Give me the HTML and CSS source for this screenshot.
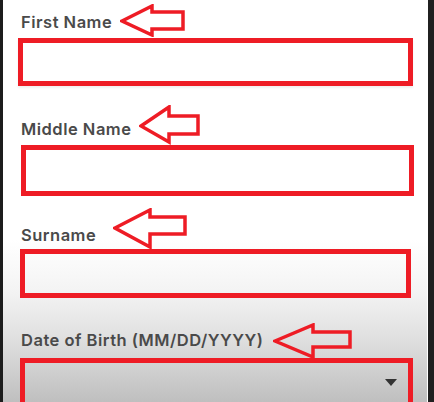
FILE: index.html
```html
<!DOCTYPE html>
<html lang="en">
<head>
<meta charset="utf-8">
<title>Form</title>
<link rel="stylesheet" href="styles.css">
</head>
<body>
<div class="screen">
  <div class="edge edge-left"></div>
  <main class="form">
    <section class="field g1">
      <div class="label-row">
        <label class="label">First Name</label>
        <svg class="arrow" width="66" height="33" viewBox="0 0 66 33"><polygon points="2,17 32,2 32,8 63,8 63,25 32,25 32,31"/></svg>
      </div>
      <div class="box"></div>
    </section>
    <section class="field g2">
      <div class="label-row">
        <label class="label">Middle Name</label>
        <svg class="arrow" width="62" height="40" viewBox="0 0 62 40"><polygon points="2,21 30,2 30,11 59,11 59,29 30,29 30,37"/></svg>
      </div>
      <div class="box"></div>
    </section>
    <section class="field g3">
      <div class="label-row">
        <label class="label">Surname</label>
        <svg class="arrow" width="75" height="41" viewBox="0 0 75 41"><polygon points="2,20 37,2 37,9 72,9 72,26 37,26 37,39"/></svg>
      </div>
      <div class="box"></div>
    </section>
    <section class="field g4">
      <div class="label-row">
        <label class="label">Date of Birth (MM/DD/YYYY)</label>
        <svg class="arrow" width="80" height="36" viewBox="0 0 80 36"><polygon points="2,18 40,2 40,9 77,9 77,24 40,24 40,34"/></svg>
      </div>
      <div class="box select"><span class="caret"></span></div>
    </section>
  </main>
  <div class="edge edge-right"></div>
</div>
</body>
</html>
```
FILE: styles.css
```css
html, body {
  margin: 0;
  padding: 0;
  width: 434px;
  height: 402px;
  overflow: hidden;
}
.screen {
  display: flex;
  width: 434px;
  height: 402px;
}
.edge {
  flex: none;
  background: #1c1c1c;
}
.edge-left { width: 3px; }
.edge-right { width: 6px; background: #202020; margin-left: 1px; }
.form {
  flex: 1;
  display: flex;
  flex-direction: column;
  padding-left: 18px;
  background: linear-gradient(to bottom, #ffffff 0, #ffffff 240px, #f4f4f4 290px, #dfdfdf 340px, #bfbfbf 402px);
  font-family: Inter, "Noto Sans", sans-serif;
  overflow: hidden;
}
.field { display: flex; flex-direction: column; flex: none; }
.label-row { display: flex; align-items: flex-start; }
.label {
  font-size: 16.5px;
  line-height: 20px;
  font-weight: 600;
  letter-spacing: 0.5px;
  color: #4a4a4a;
  white-space: nowrap;
}
.arrow { flex: none; display: block; }
.arrow polygon {
  fill: none;
  stroke: #ee1c25;
  stroke-width: 3.5;
  stroke-linejoin: miter;
}
.box {
  box-sizing: border-box;
  border: 5px solid #ee1c25;
  flex: none;
}
.g1 { margin-top: 4px; }
.g1 .label { margin-top: 8px; }
.g1 .arrow { margin-left: 8px; }
.g1 .box { margin-top: 1px; margin-left: -3px; width: 395px; height: 48px; box-shadow: 0 2px 2px rgba(0,0,0,0.06); }
.g2 { margin-top: 19px; }
.g2 .label { margin-top: 14px; }
.g2 .arrow { margin-left: 8px; }
.g2 .box { margin-left: 0; width: 393px; height: 51px; }
.g3 { margin-top: 12px; }
.g3 .label { margin-top: 17px; }
.g3 .arrow { margin-left: 17px; }
.g3 .box { margin-left: -1px; width: 391px; height: 49px; }
.g4 { margin-top: 25px; }
.g4 .label { margin-top: 7px; }
.g4 .arrow { margin-left: 10px; }
.g4 .box { margin-top: -1px; margin-left: -1px; width: 393px; height: 60px; }
.select {
  display: flex;
  justify-content: flex-end;
  align-items: flex-start;
  padding: 16px 11px 0 0;
}
.caret {
  width: 0;
  height: 0;
  border-left: 6.5px solid transparent;
  border-right: 6.5px solid transparent;
  border-top: 7px solid #333;
}
```
